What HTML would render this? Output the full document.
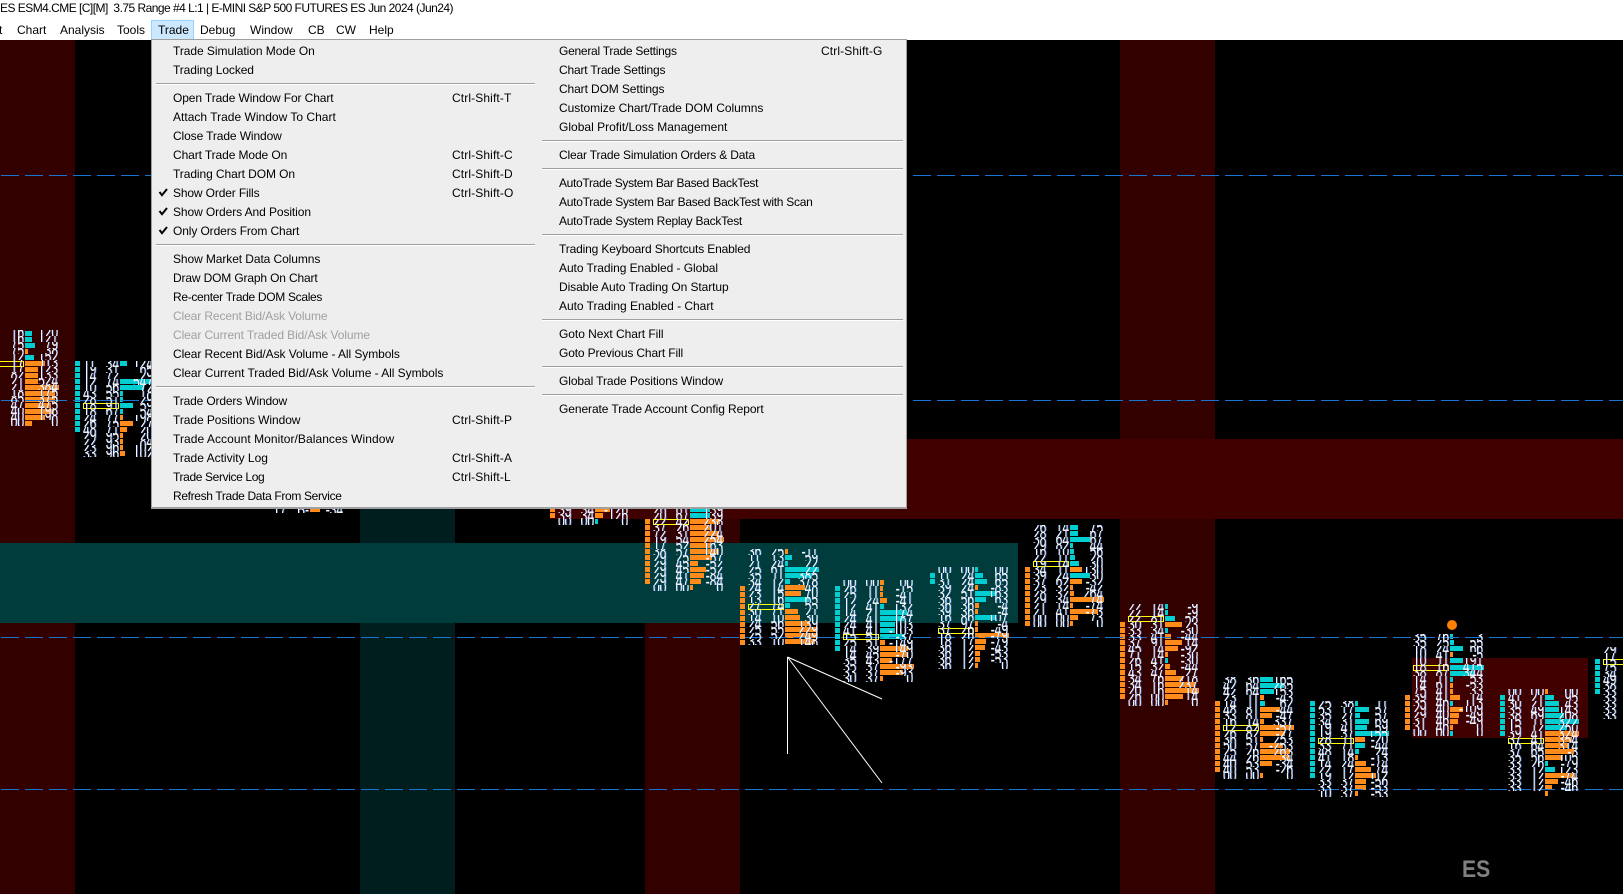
<!DOCTYPE html>
<html><head><meta charset="utf-8"><title>Chart</title>
<style>
html,body{margin:0;padding:0;background:#000;width:1623px;height:894px;overflow:hidden}
body{position:relative;font-family:"Liberation Sans",sans-serif}
#top{position:absolute;left:0;top:0;width:1623px;height:40px;background:#fff;font-size:12px;color:#000}
#top span{position:absolute;top:21px;line-height:18px;white-space:pre}
#hl{position:absolute;left:151px;top:20px;width:41px;height:19px;background:#cce8ff;border:1px solid #99d1ff;box-sizing:content-box}
svg{position:absolute;left:0;top:0}
.f{position:absolute;width:0;height:0}
.f div{position:absolute;top:0;color:#fff;font-size:20px;text-shadow:1.5px 0 0 rgba(70,130,255,.55)}
.f p{margin:0;height:6px;line-height:6px;overflow:hidden;white-space:nowrap}
.a{left:8px;width:40px;transform:scaleX(.6);transform-origin:0 0}
.b{left:4px;width:40px;text-align:right;transform:scaleX(.6);transform-origin:100% 0}
.c{left:18px;width:60px;text-align:right;transform:scaleX(.6);transform-origin:100% 0}
#menu{position:absolute;left:151px;top:39px;width:754px;height:467px;background:#eee;border:1px solid #a0a0a0;border-width:1px 1px 2px 1px;box-sizing:content-box}
.m{position:absolute;font-size:12px;line-height:18px;height:18px;color:#000;white-space:pre}
.d{color:#a0a0a0}
.l{left:21px}.k{left:300px;letter-spacing:.12px}.r{left:407px}.q{left:669px;letter-spacing:.12px}
.h{position:absolute;height:1px;background:#a0a0a0;border-bottom:1px solid #fff}
.h1{left:4px;width:379px}.h2{left:390px;width:361px}
#es{position:absolute;left:1462px;top:856px;font-size:24px;line-height:28px;font-weight:bold;color:#808080;transform:scaleX(.88);transform-origin:0 0}
</style></head><body>
<svg width="1623" height="894" viewBox="0 0 1623 894" shape-rendering="crispEdges">
<rect x="0" y="40" width="1623" height="854" fill="#000"/>
<rect x="0" y="40" width="75" height="854" fill="#330000"/>
<rect x="360" y="40" width="95" height="854" fill="#001e1e"/>
<rect x="645" y="40" width="95" height="854" fill="#330000"/>
<rect x="1120" y="40" width="95" height="854" fill="#330000"/>
<rect x="550" y="439" width="1073" height="80" fill="#400000"/>
<rect x="0" y="543" width="1018" height="80" fill="#003c3c"/>
<rect x="1412" y="658" width="176" height="80" fill="#400000"/>
<g fill="none" stroke-width="5" stroke-dasharray="5 1">
<path stroke="#00ced1" d="M77.5 361V433M837.5 586V651M932.5 573V585M1312.5 701V779M1502.5 695V737M1597.5 659V694"/>
<path stroke="#ff8c1a" d="M552.5 507V518M647.5 519V585M742.5 586V645M1027.5 567V626M1122.5 622V700M1217.5 701V773M1407.5 695V730"/>
</g>
<path fill="#00ced1" d="M25 331h7v5h-7zM25 337h7v5h-7zM25 343h10v5h-10zM25 355h9v5h-9z
M120 361h7v5h-7zM120 379h34v5h-34zM120 385h24v5h-24zM120 391h3v5h-3zM120 397h3v5h-3zM120 403h13v5h-13zM120 409h3v5h-3z
M595 519h3v5h-3z
M690 507h20v5h-20zM690 513h20v5h-20z
M785 555h7v5h-7zM785 561h3v5h-3zM785 567h34v5h-34zM785 573h27v5h-27zM785 579h5v5h-5zM785 597h24v5h-24zM785 603h5v5h-5z
M880 604h4v5h-4zM880 610h27v5h-27zM880 616h24v5h-24zM880 622h15v5h-15zM880 628h15v5h-15zM880 634h25v5h-25z
M975 567h3v5h-3zM975 573h8v5h-8zM975 579h12v5h-12zM975 591h21v5h-21zM975 597h11v5h-11zM975 615h21v5h-21z
M1070 525h8v5h-8zM1070 531h8v5h-8zM1070 537h20v5h-20zM1070 543h3v5h-3zM1070 549h4v5h-4zM1070 555h5v5h-5zM1070 561h9v5h-9zM1070 573h20v5h-20z
M1165 604h3v5h-3zM1165 610h3v5h-3zM1165 616h10v5h-10zM1165 628h3v5h-3zM1165 658h3v5h-3z
M1260 677h13v5h-13zM1260 683h24v5h-24zM1260 689h14v5h-14zM1260 701h5v5h-5z
M1355 701h3v5h-3zM1355 707h14v5h-14zM1355 713h5v5h-5zM1355 719h14v5h-14zM1355 725h12v5h-12zM1355 731h34v5h-34zM1355 743h10v5h-10zM1355 749h4v5h-4z
M1450 634h3v5h-3zM1450 640h4v5h-4zM1450 646h13v5h-13zM1450 658h13v5h-13zM1450 665h34v5h-34zM1450 671h24v5h-24zM1450 677h3v5h-3zM1450 701h3v5h-3zM1450 731h3v5h-3z
M1545 695h9v5h-9zM1545 701h14v5h-14zM1545 707h14v5h-14zM1545 713h19v5h-19zM1545 719h34v5h-34zM1545 725h22v5h-22zM1545 761h3v5h-3zM1545 767h10v5h-10z"/>
<path fill="#ff8c1a" d="M25 349h3v5h-3zM25 361h20v5h-20zM25 367h13v5h-13zM25 373h13v5h-13zM25 379h13v5h-13zM25 385h34v5h-34zM25 391h30v5h-30zM25 397h30v5h-30zM25 403h26v5h-26zM25 409h29v5h-29zM25 415h20v5h-20zM25 421h7v5h-7z
M120 415h3v5h-3zM120 421h13v5h-13zM120 427h7v5h-7zM120 433h3v5h-3zM120 439h3v5h-3zM120 445h3v5h-3zM120 451h5v5h-5z
M310 508h10v4h-10z
M595 507h15v5h-15zM595 513h8v5h-8z
M690 519h30v5h-30zM690 525h20v5h-20zM690 531h29v5h-29zM690 537h34v5h-34zM690 543h20v5h-20zM690 549h29v5h-29zM690 555h22v5h-22zM690 561h8v5h-8zM690 567h16v5h-16zM690 573h14v5h-14zM690 579h11v5h-11zM690 585h3v5h-3z
M785 549h3v5h-3zM785 585h20v5h-20zM785 591h16v5h-16zM785 609h13v5h-13zM785 615h15v5h-15zM785 621h25v5h-25zM785 627h32v5h-32zM785 633h32v5h-32zM785 639h30v5h-30z
M880 580h4v5h-4zM880 586h3v5h-3zM880 592h3v5h-3zM880 598h7v5h-7zM880 640h5v5h-5zM880 646h28v5h-28zM880 652h28v5h-28zM880 658h12v5h-12zM880 664h34v5h-34zM880 670h23v5h-23zM880 676h3v5h-3z
M975 585h3v5h-3zM975 603h4v5h-4zM975 609h3v5h-3zM975 621h3v5h-3zM975 627h3v5h-3zM975 633h34v5h-34zM975 639h11v5h-11zM975 645h10v5h-10zM975 651h5v5h-5zM975 657h5v5h-5zM975 663h3v5h-3z
M1070 567h12v5h-12zM1070 579h12v5h-12zM1070 585h3v5h-3zM1070 591h4v5h-4zM1070 597h34v5h-34zM1070 603h3v5h-3zM1070 609h28v5h-28zM1070 615h8v5h-8zM1070 621h3v5h-3z
M1165 622h17v5h-17zM1165 634h6v5h-6zM1165 640h17v5h-17zM1165 646h13v5h-13zM1165 652h3v5h-3zM1165 664h5v5h-5zM1165 670h11v5h-11zM1165 676h18v5h-18zM1165 682h30v5h-30zM1165 688h34v5h-34zM1165 694h18v5h-18zM1165 700h3v5h-3z
M1260 695h4v5h-4zM1260 707h20v5h-20zM1260 713h12v5h-12zM1260 719h4v5h-4zM1260 725h34v5h-34zM1260 731h25v5h-25zM1260 737h3v5h-3zM1260 743h23v5h-23zM1260 749h30v5h-30zM1260 755h30v5h-30zM1260 761h12v5h-12zM1260 773h3v5h-3z
M1355 737h10v5h-10zM1355 755h3v5h-3zM1355 761h11v5h-11zM1355 767h16v5h-16zM1355 773h21v5h-21zM1355 779h11v5h-11zM1355 785h11v5h-11zM1355 791h3v5h-3z
M1450 652h3v5h-3zM1450 683h3v5h-3zM1450 689h3v5h-3zM1450 695h10v5h-10zM1450 707h13v5h-13zM1450 713h9v5h-9zM1450 719h8v5h-8zM1450 725h3v5h-3z
M1545 689h3v5h-3zM1545 731h34v5h-34zM1545 737h27v5h-27zM1545 743h23v5h-23zM1545 749h29v5h-29zM1545 755h18v5h-18zM1545 773h30v5h-30zM1545 779h13v5h-13zM1545 785h7v5h-7zM1545 791h3v5h-3z"/>
<g fill="none" stroke="#1874d2" stroke-width="1" stroke-dasharray="18 6">
<path d="M1 175.5H1623M1 400.5H1623M1 637.5H1623M1 789.5H1623"/>
</g>
<g fill="none" stroke="#ffff00" stroke-width="1">
<rect x="-12.5" y="361.5" width="36" height="5"/><rect x="83.5" y="403.5" width="35" height="5"/><rect x="653.5" y="519.5" width="35" height="5"/><rect x="748.5" y="604.5" width="35" height="5"/><rect x="843.5" y="634.5" width="35" height="5"/><rect x="938.5" y="628.5" width="35" height="5"/><rect x="1033.5" y="561.5" width="35" height="5"/><rect x="1128.5" y="616.5" width="35" height="5"/><rect x="1223.5" y="725.5" width="35" height="5"/><rect x="1318.5" y="738.5" width="35" height="5"/><rect x="1413.5" y="665.5" width="35" height="5"/><rect x="1508.5" y="738.5" width="35" height="5"/><rect x="1603.5" y="659.5" width="35" height="5"/>
</g>
<circle cx="1452" cy="625" r="5" fill="#ff7f00" shape-rendering="auto"/>
<g stroke="#fff" stroke-width="1" fill="none" shape-rendering="auto">
<path d="M787.5 657V754M787.5 657L882 699M787.5 657L882 783"/>
</g>
</svg>

<div class="f" style="left:-20px;top:330px"><div class="b"><p>16<p>16<p>75<p>75<p>12<p>17<p>17<p>82<p>21<p>21<p>18<p>85<p>47<p>40<p>40<p>00</div><div class="c"><p>120<p>121<p>79<p>38<p>152<p>113<p>123<p>133<p>524<p>384<p>175<p>375<p>475<p>198<p>198<p>0</div></div>
<div class="f" style="left:75px;top:361px"><div class="a"><p>11<p>19<p>14<p>12<p>10<p>43<p>28<p>18<p>18<p>24<p>26<p>48<p>29<p>22<p>23<p>33</div><div class="b"><p>34<p>31<p>72<p>74<p>56<p>55<p>51<p>91<p>67<p>77<p>75<p>71<p>95<p>93<p>96<p>96</div><div class="c"><p>124<p>65<p>29<p>547<p>72<p>18<p>29<p>59<p>54<p>198<p>27<p>20<p>20<p>84<p>102<p>102</div></div>
<div class="f" style="left:265px;top:507px"><div class="a"><p>17</div><div class="b"><p>B-</div><div class="c"><p>-34</div></div>
<div class="f" style="left:550px;top:507px"><div class="a"><p>39<p>39<p>00</div><div class="b"><p>34<p>34<p>00</div><div class="c"><p>-126<p>126<p>0</div></div>
<div class="f" style="left:645px;top:507px"><div class="a"><p>26<p>20<p>22<p>37<p>72<p>19<p>17<p>38<p>29<p>29<p>29<p>29<p>29<p>00</div><div class="b"><p>61<p>67<p>42<p>26<p>31<p>54<p>52<p>57<p>25<p>45<p>45<p>41<p>47<p>00</div><div class="c"><p>139<p>139<p>238<p>201<p>224<p>254<p>163<p>140<p>-57<p>-52<p>-52<p>-84<p>-84<p>0</div></div>
<div class="f" style="left:740px;top:549px"><div class="a"><p>36<p>11<p>21<p>25<p>35<p>34<p>24<p>23<p>13<p>27<p>30<p>14<p>24<p>25<p>25<p>33</div><div class="b"><p>25<p>13<p>24<p>61<p>11<p>12<p>14<p>15<p>16<p>74<p>71<p>10<p>56<p>55<p>52<p>10</div><div class="c"><p>-11<p>59<p>22<p>22<p>385<p>378<p>48<p>70<p>65<p>55<p>21<p>30<p>139<p>229<p>249<p>148</div></div>
<div class="f" style="left:835px;top:580px"><div class="a"><p>00<p>26<p>25<p>12<p>12<p>14<p>24<p>24<p>41<p>15<p>25<p>14<p>14<p>35<p>35<p>33<p>30</div><div class="b"><p>00<p>11<p>11<p>24<p>41<p>21<p>41<p>41<p>41<p>51<p>51<p>39<p>45<p>43<p>37<p>37<p>37</div><div class="c"><p>00<p>-15<p>-41<p>-41<p>132<p>174<p>187<p>103<p>-103<p>-37<p>-149<p>149<p>-70<p>-177<p>-93<p>-93<p>0</div></div>
<div class="f" style="left:930px;top:567px"><div class="a"><p>00<p>11<p>31<p>39<p>32<p>36<p>36<p>39<p>16<p>37<p>37<p>18<p>18<p>36<p>36<p>36<p>36</div><div class="b"><p>00<p>24<p>24<p>24<p>51<p>56<p>36<p>36<p>86<p>97<p>26<p>26<p>17<p>12<p>12<p>12<p>12</div><div class="c"><p>00<p>65<p>65<p>-83<p>163<p>63<p>-4<p>-4<p>107<p>-4<p>-49<p>-79<p>-79<p>-43<p>-53<p>-53<p>0</div></div>
<div class="f" style="left:1025px;top:525px"><div class="a"><p>26<p>28<p>38<p>29<p>16<p>22<p>19<p>34<p>39<p>37<p>23<p>28<p>29<p>21<p>21<p>00<p>00</div><div class="b"><p>14<p>21<p>64<p>82<p>10<p>11<p>14<p>11<p>24<p>62<p>32<p>32<p>34<p>14<p>41<p>00<p>00</div><div class="c"><p>75<p>67<p>67<p>44<p>56<p>28<p>30<p>130<p>30<p>-32<p>-42<p>264<p>74<p>-74<p>-73<p>73<p>0</div></div>
<div class="f" style="left:1120px;top:604px"><div class="a"><p>22<p>22<p>22<p>30<p>33<p>33<p>37<p>45<p>71<p>26<p>15<p>43<p>34<p>34<p>20<p>26<p>00</div><div class="b"><p>14<p>14<p>81<p>31<p>34<p>41<p>91<p>14<p>14<p>41<p>32<p>47<p>76<p>16<p>16<p>00<p>00</div><div class="c"><p>-9<p>-9<p>58<p>23<p>-30<p>-44<p>14<p>-92<p>-30<p>-30<p>-44<p>27<p>218<p>237<p>14<p>14<p>0</div></div>
<div class="f" style="left:1215px;top:677px"><div class="a"><p>38<p>42<p>42<p>23<p>14<p>48<p>33<p>16<p>12<p>26<p>36<p>50<p>25<p>44<p>40<p>40<p>00</div><div class="b"><p>36<p>64<p>64<p>11<p>11<p>81<p>81<p>14<p>82<p>82<p>51<p>57<p>26<p>26<p>53<p>53<p>00</div><div class="c"><p>165<p>285<p>153<p>-43<p>62<p>-44<p>-47<p>337<p>-57<p>-27<p>253<p>-253<p>263<p>34<p>-34<p>-26<p>0</div></div>
<div class="f" style="left:1310px;top:701px"><div class="a"><p>25<p>53<p>35<p>34<p>19<p>19<p>28<p>33<p>48<p>41<p>14<p>22<p>19<p>33<p>33<p>10</div><div class="b"><p>38<p>17<p>27<p>31<p>41<p>37<p>11<p>71<p>14<p>18<p>24<p>17<p>12<p>37<p>37<p>37</div><div class="c"><p>11<p>57<p>57<p>69<p>59<p>155<p>-20<p>-44<p>24<p>-13<p>-74<p>74<p>112<p>-56<p>-53<p>-53</div></div>
<div class="f" style="left:1405px;top:634px"><div class="a"><p>35<p>35<p>18<p>10<p>10<p>18<p>38<p>14<p>14<p>75<p>39<p>35<p>29<p>29<p>31<p>31<p>00</div><div class="b"><p>76<p>25<p>24<p>41<p>11<p>16<p>87<p>11<p>61<p>41<p>41<p>46<p>40<p>40<p>46<p>46<p>00</div><div class="c"><p>3<p>55<p>66<p>-5<p>191<p>415<p>344<p>53<p>-53<p>33<p>14<p>113<p>-109<p>-49<p>-49<p>0<p>0</div></div>
<div class="f" style="left:1500px;top:689px"><div class="a"><p>00<p>41<p>30<p>35<p>38<p>15<p>15<p>39<p>37<p>16<p>37<p>35<p>33<p>33<p>33<p>33<p>33</div><div class="b"><p>00<p>21<p>21<p>49<p>69<p>11<p>12<p>41<p>41<p>64<p>65<p>56<p>26<p>12<p>12<p>12<p>12</div><div class="c"><p>00<p>95<p>43<p>143<p>208<p>322<p>250<p>324<p>354<p>314<p>-3<p>105<p>-79<p>123<p>-74<p>-46<p>-46</div></div>
<div class="f" style="left:1595px;top:647px"><div class="a"><p>29<p>17<p>15<p>75<p>34<p>49<p>38<p>33<p>33<p>33<p>33<p>33</div></div>

<div id="es">ES</div>

<div id="top">
<span style="left:0;top:-1px;letter-spacing:-.53px">ES ESM4.CME [C][M]  3.75 Range #4 L:1 | E-MINI S&amp;P 500 FUTURES ES Jun 2024 (Jun24)</span>
<div id="hl"></div>
<span style="left:-1px">t</span><span style="left:17px">Chart</span><span style="left:60px">Analysis</span><span style="left:117px">Tools</span><span style="left:158px">Trade</span><span style="left:200px">Debug</span><span style="left:250px">Window</span><span style="left:308px">CB</span><span style="left:336px">CW</span><span style="left:369px">Help</span>
</div>

<div id="menu">
<svg width="30" height="240" style="left:0;top:0" viewBox="0 0 30 240"><path d="M7.5 152l2.5 3.2 5-6.2M7.5 171l2.5 3.2 5-6.2M7.5 190l2.5 3.2 5-6.2" fill="none" stroke="#000" stroke-width="2"/></svg>
<div class="m l" style="top:2px;letter-spacing:-.05px">Trade Simulation Mode On</div>
<div class="m l" style="top:21px;letter-spacing:-.1px">Trading Locked</div>
<div class="h h1" style="top:43px"></div>
<div class="m l" style="top:49px;letter-spacing:-.11px">Open Trade Window For Chart</div><div class="m k" style="top:49px">Ctrl-Shift-T</div>
<div class="m l" style="top:68px;letter-spacing:.01px">Attach Trade Window To Chart</div>
<div class="m l" style="top:87px;letter-spacing:-.11px">Close Trade Window</div>
<div class="m l" style="top:106px;letter-spacing:-.1px">Chart Trade Mode On</div><div class="m k" style="top:106px">Ctrl-Shift-C</div>
<div class="m l" style="top:125px;letter-spacing:-.08px">Trading Chart DOM On</div><div class="m k" style="top:125px">Ctrl-Shift-D</div>
<div class="m l" style="top:144px;letter-spacing:-.14px">Show Order Fills</div><div class="m k" style="top:144px">Ctrl-Shift-O</div>
<div class="m l" style="top:163px;letter-spacing:-.09px">Show Orders And Position</div>
<div class="m l" style="top:182px;letter-spacing:-.11px">Only Orders From Chart</div>
<div class="h h1" style="top:204px"></div>
<div class="m l" style="top:210px;letter-spacing:-.09px">Show Market Data Columns</div>
<div class="m l" style="top:229px;letter-spacing:-.15px">Draw DOM Graph On Chart</div>
<div class="m l" style="top:248px;letter-spacing:-.32px">Re-center Trade DOM Scales</div>
<div class="m l d" style="top:267px;letter-spacing:-.11px">Clear Recent Bid/Ask Volume</div>
<div class="m l d" style="top:286px;letter-spacing:-.09px">Clear Current Traded Bid/Ask Volume</div>
<div class="m l" style="top:305px;letter-spacing:-.08px">Clear Recent Bid/Ask Volume - All Symbols</div>
<div class="m l" style="top:324px;letter-spacing:-.05px">Clear Current Traded Bid/Ask Volume - All Symbols</div>
<div class="h h1" style="top:346px"></div>
<div class="m l" style="top:352px;letter-spacing:-.15px">Trade Orders Window</div>
<div class="m l" style="top:371px;letter-spacing:-.07px">Trade Positions Window</div><div class="m k" style="top:371px">Ctrl-Shift-P</div>
<div class="m l" style="top:390px;letter-spacing:.06px">Trade Account Monitor/Balances Window</div>
<div class="m l" style="top:409px">Trade Activity Log</div><div class="m k" style="top:409px">Ctrl-Shift-A</div>
<div class="m l" style="top:428px;letter-spacing:-.37px">Trade Service Log</div><div class="m k" style="top:428px">Ctrl-Shift-L</div>
<div class="m l" style="top:447px;letter-spacing:-.35px">Refresh Trade Data From Service</div>

<div class="m r" style="top:2px;letter-spacing:-.26px">General Trade Settings</div><div class="m q" style="top:2px">Ctrl-Shift-G</div>
<div class="m r" style="top:21px;letter-spacing:-.19px">Chart Trade Settings</div>
<div class="m r" style="top:40px;letter-spacing:-.11px">Chart DOM Settings</div>
<div class="m r" style="top:59px;letter-spacing:-.04px">Customize Chart/Trade DOM Columns</div>
<div class="m r" style="top:78px;letter-spacing:.01px">Global Profit/Loss Management</div>
<div class="h h2" style="top:100px"></div>
<div class="m r" style="top:106px;letter-spacing:-.17px">Clear Trade Simulation Orders &amp; Data</div>
<div class="h h2" style="top:128px"></div>
<div class="m r" style="top:134px;letter-spacing:-.32px">AutoTrade System Bar Based BackTest</div>
<div class="m r" style="top:153px;letter-spacing:-.27px">AutoTrade System Bar Based BackTest with Scan</div>
<div class="m r" style="top:172px;letter-spacing:-.27px">AutoTrade System Replay BackTest</div>
<div class="h h2" style="top:194px"></div>
<div class="m r" style="top:200px;letter-spacing:-.15px">Trading Keyboard Shortcuts Enabled</div>
<div class="m r" style="top:219px;letter-spacing:-.06px">Auto Trading Enabled - Global</div>
<div class="m r" style="top:238px;letter-spacing:-.08px">Disable Auto Trading On Startup</div>
<div class="m r" style="top:257px;letter-spacing:-.03px">Auto Trading Enabled - Chart</div>
<div class="h h2" style="top:279px"></div>
<div class="m r" style="top:285px;letter-spacing:-.04px">Goto Next Chart Fill</div>
<div class="m r" style="top:304px;letter-spacing:-.14px">Goto Previous Chart Fill</div>
<div class="h h2" style="top:326px"></div>
<div class="m r" style="top:332px;letter-spacing:-.09px">Global Trade Positions Window</div>
<div class="h h2" style="top:354px"></div>
<div class="m r" style="top:360px;letter-spacing:-.08px">Generate Trade Account Config Report</div>
</div>
</body></html>
